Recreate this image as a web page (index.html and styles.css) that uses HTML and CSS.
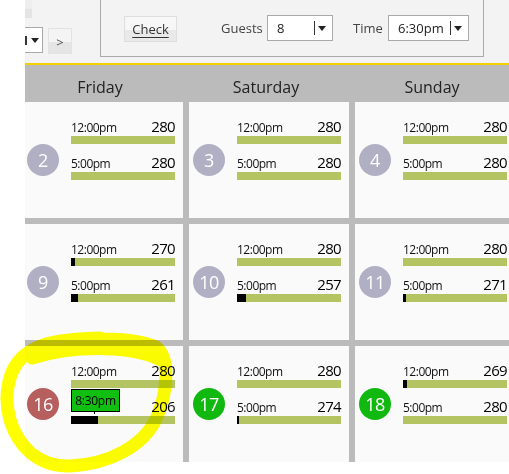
FILE: index.html
```html
<!DOCTYPE html>
<html lang="en">
<head>
    <meta charset="UTF-8">
    <meta name="viewport" content="width=device-width, initial-scale=1.0">
    <title>Bookings</title>
    <link rel="stylesheet" href="styles.css">
</head>
<body>

<div class="page">
    <!-- Search bar -->
    <div class="toolbar">
        <div class="nav">
            <div class="stub"></div>
            <div class="nav-row">
                <div class="select select-cut"><span class="sep"></span><span class="caret"></span></div>
                <button class="next" type="button">&gt;</button>
            </div>
        </div>
        <div class="search">
            <button class="check" type="button">Check</button>
            <span class="field-label guests-label">Guests</span>
            <div class="select guests"><span>8</span><span class="sep"></span><span class="caret"></span></div>
            <span class="field-label time-label">Time</span>
            <div class="select time"><span>6:30pm</span><span class="sep"></span><span class="caret"></span></div>
        </div>
    </div>

    <!-- Day names -->
    <div class="days">
        <div class="days-row">
            <div class="day">Friday</div>
            <div class="day">Saturday</div>
            <div class="day">Sunday</div>
        </div>
    </div>

    <!-- Calendar cells -->
    <div class="grid">
        <div class="cell">
            <div class="date">2</div>
            <div class="slots">
                <div class="slot"><div class="slot-head"><span class="slot-time">12:00pm</span><span class="slot-count">280</span></div><div class="bar"></div></div>
                <div class="slot"><div class="slot-head"><span class="slot-time">5:00pm</span><span class="slot-count">280</span></div><div class="bar"></div></div>
            </div>
        </div>
        <div class="cell">
            <div class="date">3</div>
            <div class="slots">
                <div class="slot"><div class="slot-head"><span class="slot-time">12:00pm</span><span class="slot-count">280</span></div><div class="bar"></div></div>
                <div class="slot"><div class="slot-head"><span class="slot-time">5:00pm</span><span class="slot-count">280</span></div><div class="bar"></div></div>
            </div>
        </div>
        <div class="cell">
            <div class="date">4</div>
            <div class="slots">
                <div class="slot"><div class="slot-head"><span class="slot-time">12:00pm</span><span class="slot-count">280</span></div><div class="bar"></div></div>
                <div class="slot"><div class="slot-head"><span class="slot-time">5:00pm</span><span class="slot-count">280</span></div><div class="bar"></div></div>
            </div>
        </div>

        <div class="cell">
            <div class="date">9</div>
            <div class="slots">
                <div class="slot"><div class="slot-head"><span class="slot-time">12:00pm</span><span class="slot-count">270</span></div><div class="bar"><span class="bar-used" style="width: 3.6%"></span></div></div>
                <div class="slot"><div class="slot-head"><span class="slot-time">5:00pm</span><span class="slot-count">261</span></div><div class="bar"><span class="bar-used" style="width: 6.8%"></span></div></div>
            </div>
        </div>
        <div class="cell">
            <div class="date">10</div>
            <div class="slots">
                <div class="slot"><div class="slot-head"><span class="slot-time">12:00pm</span><span class="slot-count">280</span></div><div class="bar"></div></div>
                <div class="slot"><div class="slot-head"><span class="slot-time">5:00pm</span><span class="slot-count">257</span></div><div class="bar"><span class="bar-used" style="width: 8.2%"></span></div></div>
            </div>
        </div>
        <div class="cell">
            <div class="date">11</div>
            <div class="slots">
                <div class="slot"><div class="slot-head"><span class="slot-time">12:00pm</span><span class="slot-count">280</span></div><div class="bar"></div></div>
                <div class="slot"><div class="slot-head"><span class="slot-time">5:00pm</span><span class="slot-count">271</span></div><div class="bar"><span class="bar-used" style="width: 3.2%"></span></div></div>
            </div>
        </div>

        <div class="cell">
            <div class="date date-full">16</div>
            <div class="slots">
                <div class="slot"><div class="slot-head"><span class="slot-time">12:00pm</span><span class="slot-count">280</span></div><div class="bar"></div></div>
                <div class="slot">
                    <div class="pick">8:30pm</div>
                    <div class="slot-head"><span class="slot-time"></span><span class="slot-count">206</span></div>
                    <div class="bar"><span class="bar-used" style="width: 26.4%"></span></div>
                </div>
            </div>
        </div>
        <div class="cell">
            <div class="date date-open">17</div>
            <div class="slots">
                <div class="slot"><div class="slot-head"><span class="slot-time">12:00pm</span><span class="slot-count">280</span></div><div class="bar"></div></div>
                <div class="slot"><div class="slot-head"><span class="slot-time">5:00pm</span><span class="slot-count">274</span></div><div class="bar"><span class="bar-used" style="width: 2.1%"></span></div></div>
            </div>
        </div>
        <div class="cell">
            <div class="date date-open">18</div>
            <div class="slots">
                <div class="slot"><div class="slot-head"><span class="slot-time">12:00pm</span><span class="slot-count">269</span></div><div class="bar"><span class="bar-used" style="width: 3.9%"></span></div></div>
                <div class="slot"><div class="slot-head"><span class="slot-time">5:00pm</span><span class="slot-count">280</span></div><div class="bar"></div></div>
            </div>
        </div>
    </div>
</div>

<!-- highlighter mark drawn over the page -->
<svg class="scribble" width="509" height="474" viewBox="0 0 509 474">
    <path d="M40 349 C60 337, 130 335, 156 347 C171 358, 167 395, 156 419 C143 446, 110 464, 70 466 C38 467, 18 446, 10 420 C3 395, 8 365, 29 352 C45 341, 70 339, 100 338" />
    <path d="M32 358 C70 346, 128 344, 161 360" />
</svg>

</body>
</html>
```

FILE: styles.css
```css
/* Page */
body {
    margin: 0;
    height: 474px;
    background: #fff;
    font-family: "Open Sans", Arial, sans-serif;
    position: relative;
    overflow: hidden;
}

.page {
    margin-left: 25px;
    overflow: hidden;
}

/* Top bar */
.toolbar {
    display: flex;
    align-items: flex-start;
    height: 63px;
    background: #f3f3f3;
}

.nav {
    width: 75px;
}

.stub {
    width: 7px;
    height: 18px;
    background: linear-gradient(#eeeeee 50%, #e4e4e4 50%);
}

.nav-row {
    display: flex;
    margin-top: 9px;
}

/* Select boxes */
.select {
    display: flex;
    align-items: center;
    height: 26px;
    box-sizing: border-box;
    border: 1px solid #a9a9a9;
    background: #fff;
    font-size: 13px;
    color: #222;
}

.select .sep {
    width: 1px;
    height: 14px;
    margin-left: auto;
    background: #333;
}

.select .caret {
    width: 0;
    height: 0;
    margin: 1px 6px 0 3px;
    border-left: 4px solid transparent;
    border-right: 4px solid transparent;
    border-top: 5px solid #222;
}

.select-cut {
    width: 18px;
    border-left: none;
}

.select-cut .sep {
    width: 2px;
    height: 9px;
    margin: 0;
}

.select-cut .caret {
    margin: 1px 0 0 4px;
}

.next {
    width: 24px;
    height: 26px;
    margin: 1px 0 0 5px;
    padding: 2px 0 0;
    border: 1px solid #e2e2e2;
    background: linear-gradient(#f4f4f4 55%, #e5e5e5 55%);
    font-family: inherit;
    font-size: 13px;
    color: #555;
}

/* Search box */
.search {
    display: flex;
    align-items: flex-start;
    width: 384px;
    height: 57px;
    box-sizing: border-box;
    padding: 15px 0 0 23px;
    border: 1px solid #a9a9a9;
    border-top: none;
}

.check {
    width: 53px;
    height: 26px;
    margin-top: 1px;
    padding: 0;
    border: 1px solid #dedede;
    background: linear-gradient(#f7f7f7 55%, #e9e9e9 55%);
    font-family: inherit;
    font-size: 13px;
    color: #333;
    text-decoration: underline;
    text-underline-offset: 3px;
}

.field-label {
    font-size: 13px;
    line-height: 26px;
    color: #444;
}

.guests-label {
    width: 46px;
    margin-left: 44px;
}

.time-label {
    width: 35px;
    margin-left: 20px;
}

.guests {
    width: 66px;
    padding-left: 9px;
}

.time {
    width: 81px;
    padding-left: 9px;
}

/* Day names */
.days {
    height: 37px;
    border-top: 2px solid #f2d100;
    background: #bbbbbb;
}

.days-row {
    display: grid;
    grid-template-columns: repeat(3, 160px);
    column-gap: 6px;
    margin-left: -2px;
}

.day {
    padding: 12px 6px 0 0;
    text-align: center;
    font-size: 16px;
    line-height: 20px;
    color: #222;
}

/* Calendar grid */
.grid {
    display: grid;
    grid-template-columns: repeat(3, 160px);
    grid-auto-rows: 116px;
    gap: 6px;
    width: 492px;
    margin-left: -2px;
    background: #bbbbbb;
}

.cell {
    display: flex;
    align-items: flex-start;
    padding: 14px 0 0 4px;
    background: #fafafa;
}

.date {
    flex: none;
    width: 32px;
    height: 32px;
    margin-top: 28px;
    border-radius: 50%;
    background: #b1afc4;
    color: #fff;
    font-size: 18px;
    line-height: 32px;
    letter-spacing: -0.5px;
    text-align: center;
}

.date-full {
    background: #b75f5f;
}

.date-open {
    background: #10b810;
}

.slots {
    display: flex;
    flex-direction: column;
    gap: 8px;
    width: 104px;
    margin-left: 12px;
}

.slot {
    position: relative;
}

.slot-head {
    display: flex;
    justify-content: space-between;
    align-items: baseline;
    height: 20px;
    line-height: 20px;
}

.slot-time {
    font-size: 12px;
    letter-spacing: -0.5px;
    color: #111;
}

.slot-count {
    font-size: 15px;
    letter-spacing: -0.7px;
    color: #000;
}

.bar {
    height: 8px;
    background: #b5c462;
}

.bar-used {
    display: block;
    height: 100%;
    background: #000;
}

/* Chosen time tag */
.pick {
    position: absolute;
    left: 0;
    top: -7px;
    width: 47px;
    height: 21px;
    border: 1px solid #000;
    background: #11bf11;
    font-size: 12px;
    line-height: 21px;
    letter-spacing: -0.3px;
    text-align: center;
    color: #000;
}

.pick::after {
    content: "";
    position: absolute;
    left: 22px;
    top: 100%;
    width: 1px;
    height: 2px;
    margin-top: 1px;
    background: #000;
}

/* Highlighter mark */
.scribble {
    position: absolute;
    left: 0;
    top: 0;
    mix-blend-mode: multiply;
    pointer-events: none;
}

.scribble path {
    fill: none;
    stroke: #ffff00;
    stroke-width: 13;
    stroke-linecap: round;
    stroke-linejoin: round;
}
```
